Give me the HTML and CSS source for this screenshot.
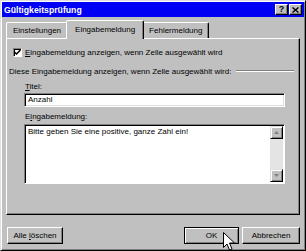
FILE: index.html
```html
<!DOCTYPE html>
<html lang="de">
<head>
  <meta charset="utf-8">
  <title>Gültigkeitsprüfung</title>
  <link rel="stylesheet" href="styles.css">
</head>
<body>
  <div class="dialog">
    <!-- Title bar -->
    <div class="titlebar">
      <span class="title">Gültigkeitsprüfung</span>
      <div class="title-buttons">
        <span class="title-btn help">?</span>
        <span class="title-btn close">
          <svg width="7" height="6" viewBox="0 0 7 6"><path d="M0.5 0.5 L6.5 5.5 M6.5 0.5 L0.5 5.5" stroke="#000" stroke-width="1.4"/></svg>
        </span>
      </div>
    </div>

    <!-- Tabs -->
    <div class="tabs">
      <div class="tab">Einstellungen</div>
      <div class="tab active">Eingabemeldung</div>
      <div class="tab">Fehlermeldung</div>
    </div>

    <!-- Tab page -->
    <div class="panel">
      <div class="check-row">
        <span class="checkbox">
          <svg width="7" height="7" viewBox="0 0 7 7"><path d="M0.5 3 L2.5 5 L6.5 1" fill="none" stroke="#000" stroke-width="1.5"/></svg>
        </span>
        <span><u>E</u>ingabemeldung anzeigen, wenn Zelle ausgewählt wird</span>
      </div>

      <div class="desc-row">
        <span>Diese Eingabemeldung anzeigen, wenn Zelle ausgewählt wird:</span>
        <span class="groove"></span>
      </div>

      <div class="field-label"><u>T</u>itel:</div>
      <div class="input">Anzahl</div>

      <div class="field-label memo-label">E<u>i</u>ngabemeldung:</div>
      <div class="memo">
        <div class="memo-text">Bitte geben Sie eine positive, ganze Zahl ein!</div>
        <div class="scrollbar">
          <span class="scroll-btn">
            <svg width="5" height="3" viewBox="0 0 5 3"><path d="M0 3 L2.5 0 L5 3 Z" fill="#808080"/></svg>
          </span>
          <span class="scroll-track"></span>
          <span class="scroll-btn">
            <svg width="5" height="3" viewBox="0 0 5 3"><path d="M0 0 L2.5 3 L5 0 Z" fill="#808080"/></svg>
          </span>
        </div>
      </div>
    </div>

    <!-- Buttons -->
    <div class="footer">
      <button class="btn clear-btn">Alle <u>l</u>öschen</button>
      <button class="btn default ok-btn">OK</button>
      <button class="btn cancel-btn">Abbrechen</button>
    </div>

    <!-- Mouse pointer over OK -->
    <svg class="pointer" width="12" height="19" viewBox="0 0 12 19">
      <path d="M0.5 0.5 L0.5 15.5 L4 12 L6.5 18 L9 17 L6.5 11 L11.5 11 Z" fill="#fff" stroke="#000" stroke-width="1"/>
    </svg>
  </div>
</body>
</html>
```

FILE: styles.css
```css
* {
  box-sizing: border-box;
}

body {
  margin: 0;
  background-color: #c0c0c0;
  font-family: "Liberation Sans", Arial, sans-serif;
  font-size: 8px;
  color: #000;
}

u {
  text-decoration-thickness: 1px;
  text-underline-offset: 1px;
}

/* Window frame */
.dialog {
  position: relative;
  width: 306px;
  height: 251px;
  padding: 1px;
  display: flex;
  flex-direction: column;
  background-color: #c0c0c0;
  border: 1px solid;
  border-color: #dfdfdf #000 #000 #dfdfdf;
  box-shadow: inset 1px 1px #fff, inset -1px -1px #808080;
}

/* Title bar */
.titlebar {
  height: 15px;
  display: flex;
  align-items: center;
  justify-content: space-between;
  padding: 0 2px 0 2px;
  background-color: #0000f4;
}

.title {
  color: #fff;
  font-weight: bold;
  font-size: 8.7px;
}

.title-buttons {
  display: flex;
  gap: 1px;
}

.title-btn {
  width: 13px;
  height: 11px;
  display: flex;
  align-items: center;
  justify-content: center;
  background-color: #c0c0c0;
  border: 1px solid;
  border-color: #fff #000 #000 #fff;
  box-shadow: inset -1px -1px #808080;
  font-weight: bold;
  font-size: 9px;
  line-height: 1;
}

/* Tabs */
.tabs {
  height: 18px;
  margin-top: 3px;
  padding-left: 4px;
  display: flex;
  align-items: flex-end;
}

.tab {
  height: 16px;
  padding: 0 6px;
  display: flex;
  align-items: center;
  border: 1px solid;
  border-bottom: none;
  border-color: #fff #000 transparent #fff;
  border-radius: 2px 2px 0 0;
  box-shadow: inset -1px 0 #808080;
}

.tab.active {
  position: relative;
  z-index: 1;
  height: 19px;
  margin: 0 -2px -1px;
  padding: 0 8px 2px;
  background-color: #c0c0c0;
}

/* Tab page */
.panel {
  height: 177px;
  margin: 0 4px;
  padding: 8px 6px 0;
  border: 1px solid;
  border-color: #fff #000 #000 #fff;
  box-shadow: inset -1px -1px #808080;
}

.check-row {
  height: 10px;
  display: flex;
  align-items: center;
  gap: 3px;
}

.checkbox {
  width: 9px;
  height: 9px;
  display: flex;
  align-items: center;
  justify-content: center;
  background-color: #fff;
  border: 1px solid;
  border-color: #808080 #fff #fff #808080;
  box-shadow: inset 1px 1px #000;
}

.desc-row {
  height: 10px;
  margin: 9px -1px 0 -4px;
  display: flex;
  align-items: center;
}

.groove {
  flex: 1;
  height: 2px;
  margin-left: 5px;
  border-top: 1px solid #808080;
  border-bottom: 1px solid #fff;
}

.field-label {
  height: 10px;
  margin: 6px 0 0 12px;
  line-height: 10px;
}

.memo-label {
  margin-top: 5px;
}

.input {
  width: 261px;
  height: 14px;
  margin: 1px 0 0 11px;
  padding: 0 3px;
  line-height: 10px;
  background-color: #fff;
  border: 1px solid;
  border-color: #808080 #fff #fff #808080;
  box-shadow: inset 1px 1px #000, inset -1px -1px #dfdfdf;
  padding-top: 1px;
}

.memo {
  width: 261px;
  height: 60px;
  margin: 2px 0 0 11px;
  display: flex;
  background-color: #fff;
  border: 1px solid;
  border-color: #808080 #fff #fff #808080;
  box-shadow: inset 1px 1px #000;
  padding: 1px 1px 1px 1px;
}

.memo-text {
  flex: 1;
  padding: 1px 2px;
  line-height: 10px;
}

.scrollbar {
  width: 13px;
  display: flex;
  flex-direction: column;
  background-color: #e4e4e4;
}

.scroll-btn {
  height: 13px;
  display: flex;
  align-items: center;
  justify-content: center;
  background-color: #c0c0c0;
  border: 1px solid;
  border-color: #dfdfdf #000 #000 #dfdfdf;
  box-shadow: inset 1px 1px #fff, inset -1px -1px #808080;
}

.scroll-track {
  flex: 1;
}

/* Dialog buttons */
.footer {
  margin-top: 12px;
  padding: 0 4px 0 5px;
  display: flex;
  align-items: center;
}

.btn {
  height: 17px;
  padding: 0;
  font-family: inherit;
  font-size: 8px;
  color: #000;
  background-color: #c0c0c0;
  border: 1px solid;
  border-color: #fff #000 #000 #fff;
  box-shadow: inset -1px -1px #808080;
}

.btn.default {
  border-color: #000;
  box-shadow: inset 1px 1px #fff, inset -1px -1px #808080;
}

.clear-btn {
  width: 56px;
}

.ok-btn {
  width: 55px;
  margin-left: auto;
}

.cancel-btn {
  width: 58px;
  margin-left: 3px;
}

.pointer {
  position: absolute;
  left: 222px;
  top: 231px;
}
```
